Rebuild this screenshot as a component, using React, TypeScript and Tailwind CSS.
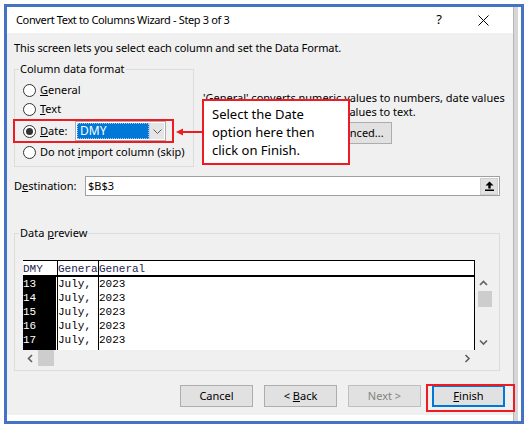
import React from "react";

const mono = "font-['Liberation_Mono',monospace] text-[11px] leading-[14px]";

const Radio = ({ checked = false }: { checked?: boolean }) => (
  <span className="w-[13px] h-[13px] rounded-full border border-[#333] bg-white flex items-center justify-center shrink-0">
    {checked && <span className="w-[7px] h-[7px] rounded-full bg-[#333]" />}
  </span>
);

const Chevron = ({ dir }: { dir: "up" | "down" | "left" | "right" }) => {
  const d = {
    up: "M1 5 L4.5 1.5 L8 5",
    down: "M1 1.5 L4.5 5 L8 1.5",
    left: "M5 1 L1.5 4.5 L5 8",
    right: "M1.5 1 L5 4.5 L1.5 8",
  }[dir];
  const horiz = dir === "up" || dir === "down";
  return (
    <svg width={horiz ? 9 : 7} height={horiz ? 7 : 9} viewBox={horiz ? "0 0 9 7" : "0 0 7 9"}>
      <path d={d} stroke="#606060" strokeWidth="1.6" fill="none" />
    </svg>
  );
};

const rows = ["13", "14", "15", "16", "17", ""];

const Preview = () => (
  <div className="flex">
    <div className="w-[452px] flex flex-col">
      <div className="h-[90px] border-t border-r border-black bg-white overflow-hidden">
        <div className={`flex h-[16px] border-b-2 border-black ${mono} text-[#1c1c50]`}>
          <div className="w-[35px] border-r border-black pt-[1px]">DMY</div>
          <div className="w-[41px] border-r border-black overflow-hidden whitespace-nowrap pt-[1px]">Genera</div>
          <div className="flex-1 pt-[1px]">General</div>
        </div>
        {rows.map((r, i) => (
          <div key={i} className={`flex h-[14px] ${mono}`}>
            <div className="w-[35px] border-r border-black">
              <div className="w-[33px] h-full bg-black text-white">{r}</div>
            </div>
            <div className="w-[41px] border-r border-black">{r ? "July," : ""}</div>
            <div className="flex-1">{r ? "2023" : ""}</div>
          </div>
        ))}
      </div>
      <div className="h-[16px] flex items-center">
        <div className="w-[15px] flex justify-center">
          <Chevron dir="left" />
        </div>
        <div className="w-[16px] h-full bg-[#cdcdcd]" />
        <div className="flex-1" />
        <div className="w-[16px] flex justify-center">
          <Chevron dir="right" />
        </div>
      </div>
    </div>
    <div className="w-[17px] mt-[16px] h-[74px] flex flex-col items-center">
      <div className="h-[15px] flex items-center justify-center">
        <Chevron dir="up" />
      </div>
      <div className="w-[14px] h-[16px] bg-[#cdcdcd] ml-[2px]" />
      <div className="flex-1" />
      <div className="h-[16px] flex items-center justify-center">
        <Chevron dir="down" />
      </div>
    </div>
  </div>
);

const Button = ({ children, disabled = false, primary = false }: { children: React.ReactNode; disabled?: boolean; primary?: boolean }) => (
  <div
    className={`w-[73px] h-[22px] flex items-center justify-center bg-[#e1e1e1] ${
      primary ? "border-2 border-[#0078d7]" : disabled ? "border border-[#bfbfbf] text-[#838383]" : "border border-[#adadad]"
    }`}
  >
    {children}
  </div>
);

export default function App() {
  return (
    <div className="w-[529px] h-[428px] bg-white pt-[4px] pl-[4px] font-['Noto_Sans',sans-serif] text-[11px] text-black">
      <div className="w-[520px] h-[420px] border-[3px] border-[#4472c4] flex">
        <div className="w-[506px] flex flex-col">
          {/* title bar */}
          <div className="h-[26px] bg-white flex items-center pl-[9px]">
            <span className="text-[11px] tracking-[-0.35px]">Convert Text to Columns Wizard - Step 3 of 3</span>
            <span className="ml-auto text-[13px]">?</span>
            <svg className="ml-[36px] mr-[24px]" width="11" height="11" viewBox="0 0 11 11">
              <path d="M0.5 0.5 L10.5 10.5 M10.5 0.5 L0.5 10.5" stroke="#000" strokeWidth="1" />
            </svg>
          </div>

          <div className="flex-1 bg-[#f0f0f0] pl-[7px] pt-[7px]">
            <div className="leading-[16px] tracking-[-0.1px]">This screen lets you select each column and set the Data Format.</div>

            <div className="relative flex mt-[13px]">
              <div className="relative w-[180px] h-[98px] border border-[#dcdcdc] pt-[11px]">
                <span className="absolute left-[4px] top-[-9px] bg-[#f0f0f0] px-[1px] leading-[16px]">Column data format</span>
                <div className="h-[19px] flex items-center gap-[4px] pl-[8px]">
                  <Radio />
                  <span><u>G</u>eneral</span>
                </div>
                <div className="h-[19px] flex items-center gap-[4px] pl-[8px]">
                  <Radio />
                  <span><u>T</u>ext</span>
                </div>
                <div className="h-[24px] w-[161px] ml-[-2px] border-2 border-[#ec1c24] flex items-center pl-[8px]">
                  <Radio checked />
                  <span className="w-[39px] pl-[4px]"><u>D</u>ate:</span>
                  <div className="w-[91px] h-[20px] border border-[#adadad] bg-white flex items-center p-[1px]">
                    <div className="flex-1 h-full bg-[#0078d7] border border-dotted border-[#9cc7ee] text-white flex items-center pl-[2px] text-[12px]">
                      DMY
                    </div>
                    <div className="w-[15px] h-full bg-[#e5e5e5] border-l border-[#cccccc] flex items-center justify-center">
                      <svg width="9" height="5" viewBox="0 0 9 5">
                        <path d="M0.5 0.5 L4.5 4.5 L8.5 0.5" stroke="#606060" strokeWidth="1" fill="none" />
                      </svg>
                    </div>
                  </div>
                </div>
                <div className="h-[18px] flex items-center gap-[4px] pl-[8px]">
                  <Radio />
                  <span>Do not <u>i</u>mport column (skip)</span>
                </div>
              </div>

              <div className="ml-[9px] pt-[22px]">
                <div className="leading-[14px] whitespace-nowrap">'General' converts numeric values to numbers, date values</div>
                <div className="leading-[14px] whitespace-nowrap">to dates, and all remaining values to text.</div>
                <div className="ml-[113px] mt-[3px] w-[76px] h-[22px] border border-[#adadad] bg-[#e1e1e1] flex items-center justify-center">
                  <u>A</u>dvanced...
                </div>
              </div>

              {/* annotation arrow + callout */}
              <svg className="absolute left-[162px] top-[59px]" width="26" height="8" viewBox="0 0 26 8">
                <path d="M6 4 H26" stroke="#ec1c24" strokeWidth="2" />
                <path d="M0 4 L7 0.5 L7 7.5 Z" fill="#ec1c24" />
              </svg>
              <div className="absolute left-[188px] top-[30px] w-[148px] h-[66px] border-2 border-[#ec1c24] bg-white pl-[8px] pt-[4px] text-[13px] leading-[18px]">
                Select the Date
                <br />
                option here then
                <br />
                click on Finish.
              </div>
            </div>

            <div className="mt-[9px] flex items-center h-[20px]">
              <span className="w-[71px]">D<u>e</u>stination:</span>
              <div className="w-[415px] h-[20px] border border-[#a0a0a0] bg-white flex items-center pl-[2px] pr-[1px]">
                <span>$B$3</span>
                <div className="ml-auto w-[18px] h-[17px] bg-[#e1e1e1] border border-[#cfcfcf] flex items-center justify-center">
                  <svg width="9" height="10" viewBox="0 0 9 10">
                    <path d="M4.5 0.5 L8.5 4.5 H5.7 V7.5 H3.3 V4.5 H0.5 Z" fill="#000" />
                    <rect x="0" y="8.5" width="9" height="1.5" fill="#000" />
                  </svg>
                </div>
              </div>
            </div>

            <div className="relative mt-[37px] w-[486px] h-[138px] border border-[#dcdcdc] pt-[26px] pl-[8px]">
              <span className="absolute left-[4px] top-[-9px] bg-[#f0f0f0] px-[1px] leading-[16px]">
                Data <u>p</u>review
              </span>
              <Preview />
            </div>

            <div className="mt-[14px] flex justify-end gap-[11px] pr-[8px]">
              <Button>Cancel</Button>
              <Button>
                &lt;&nbsp;<u>B</u>ack
              </Button>
              <Button disabled>Next &gt;</Button>
              <div className="relative">
                <Button primary>
                  <u>F</u>inish
                </Button>
                <div className="absolute left-[-6px] top-[-1px] w-[89px] h-[28px] border-2 border-[#ec1c24]" />
              </div>
            </div>
          </div>
          <div className="h-[6px] bg-white" />
        </div>
        <div className="w-[5px] bg-[#d6d6d6] border-l border-[#b5b5b5]" />
        <div className="flex-1 bg-white" />
      </div>
    </div>
  );
}
